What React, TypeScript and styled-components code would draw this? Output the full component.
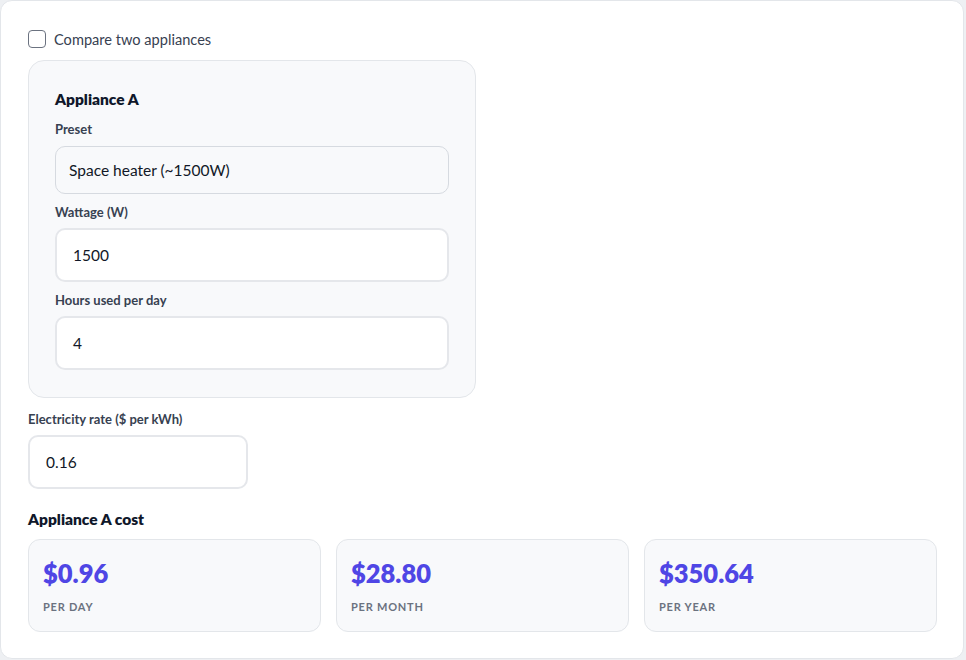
import React from 'react'
import styled, {createGlobalStyle} from 'styled-components'

const GlobalStyle = createGlobalStyle`
    html, body{
        margin: 0;
        padding: 0;
        background: #eef0f3;
        font-family: "Lato", "Inter", sans-serif;
        color: #111827;
    }
    *{
        box-sizing: border-box;
    }
`

const Card = styled.div`
    width: 964px;
    height: 659px;
    background: #ffffff;
    border: 1px solid #e3e6ea;
    border-radius: 12px;
    padding: 29px 26px 26px 27px;
    display: flex;
    flex-direction: column;
`

const CheckRow = styled.label`
    display: flex;
    align-items: center;
    gap: 8px;
    height: 18px;
    font-size: 14.6px;
    color: #374151;
`

const Box = styled.span`
    width: 18px;
    height: 18px;
    border: 1.5px solid #6b7280;
    border-radius: 4px;
    background: #fff;
`

const Panel = styled.section`
    margin-top: 12px;
    width: 448px;
    background: #f8f9fb;
    border: 1px solid #e3e6ea;
    border-radius: 16px;
    padding: 28px 26px 27px 26px;
    display: flex;
    flex-direction: column;
`

const Title = styled.h3<{$gap?: number}>`
    margin: 0;
    margin-top: ${p => p.$gap ?? 0}px;
    font-size: 15.5px;
    line-height: 20px;
    font-weight: 800;
    color: #0f172a;
`

const Label = styled.div<{$gap: number}>`
    margin-top: ${p => p.$gap}px;
    font-size: 13px;
    line-height: 17px;
    font-weight: 700;
    color: #374151;
`

const Field = styled.div<{$width?: number; $select?: boolean}>`
    margin-top: ${p => (p.$select ? 8 : 7)}px;
    width: ${p => (p.$width ? `${p.$width}px` : '100%')};
    height: ${p => (p.$select ? 48 : 54)}px;
    flex-shrink: 0;
    display: flex;
    align-items: center;
    padding-left: ${p => (p.$select ? 13 : 16)}px;
    background: ${p => (p.$select ? '#f8f9fb' : '#ffffff')};
    border: ${p => (p.$select ? '1px solid #d6dae0' : '2px solid #e5e7eb')};
    border-radius: 10px;
    font-size: 15.5px;
    color: #111827;
`

const Stats = styled.div`
    margin-top: 10px;
    display: grid;
    grid-template-columns: repeat(3, 1fr);
    gap: 15px;
    width: 909px;
`

const Stat = styled.div`
    height: 93px;
    background: #f8f9fb;
    border: 1px solid #e3e6ea;
    border-radius: 12px;
    padding: 18px 14px;
`

const Value = styled.div`
    font-size: 25.5px;
    line-height: 30px;
    font-weight: 800;
    color: #4f46e5;
`

const Period = styled.div`
    margin-top: 12px;
    font-size: 11px;
    line-height: 14px;
    font-weight: 700;
    letter-spacing: 0.07em;
    color: #6b7280;
`

const stats = [
    {value: '$0.96', period: 'Per day'},
    {value: '$28.80', period: 'Per month'},
    {value: '$350.64', period: 'Per year'},
]

const App = () => {
    return (
        <>
        <GlobalStyle />
        <Card>
            <CheckRow>
                <Box />
                Compare two appliances
            </CheckRow>

            <Panel>
                <Title>Appliance A</Title>
                <Label $gap={12}>Preset</Label>
                <Field $select>Space heater (~1500W)</Field>
                <Label $gap={10}>Wattage (W)</Label>
                <Field>1500</Field>
                <Label $gap={10}>Hours used per day</Label>
                <Field>4</Field>
            </Panel>

            <Label $gap={13}>Electricity rate ($ per kWh)</Label>
            <Field $width={220}>0.16</Field>

            <Title $gap={20}>Appliance A cost</Title>
            <Stats>
                {stats.map(s => (
                    <Stat key={s.period}>
                        <Value>{s.value}</Value>
                        <Period>{s.period.toUpperCase()}</Period>
                    </Stat>
                ))}
            </Stats>
        </Card>
        </>
    )
}

export default App
